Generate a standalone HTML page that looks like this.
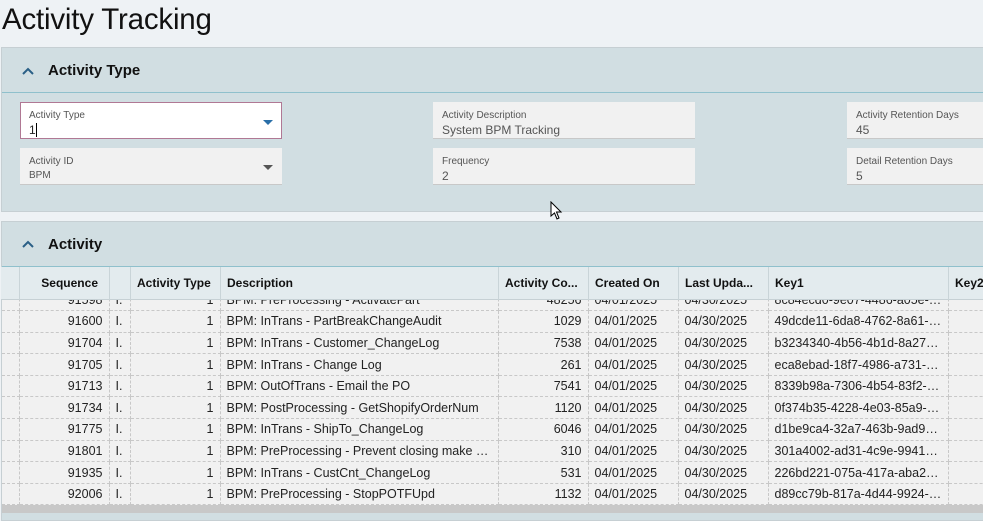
<!DOCTYPE html>
<html><head><style>
*{box-sizing:border-box;margin:0;padding:0}
body{width:983px;height:513px;overflow:hidden;background:#eef2f5;font-family:"Liberation Sans",sans-serif;position:relative;color:#222}
.abs{position:absolute}
h1{position:absolute;left:2px;top:3px;font-size:29.5px;font-weight:normal;color:#111;letter-spacing:-0.2px}
.panel{position:absolute;left:1px;width:990px;background:#d1dee2;border:1px solid #c6cfd3}
.ph{position:absolute;left:0;right:0;top:0;border-bottom:1px solid #8fc0cc}
.ph b{position:absolute;left:46px;font-size:15px;color:#111}
.chev{position:absolute;left:19px;width:14px;height:10px}
.f{position:absolute;width:262px;height:37px;background:#f1f1f1;border-bottom:1px solid #c8c8c8}
.f .l{position:absolute;left:9px;top:8px;font-size:10px;color:#555}
.f .v{position:absolute;left:9px;top:21px;font-size:12px;color:#555}
.f .dd{position:absolute;right:9px;top:17px;width:0;height:0;border-left:5px solid transparent;border-right:5px solid transparent;border-top:5px solid #555}
table{border-collapse:collapse;table-layout:fixed;font-size:12.5px}
td{height:21.6px;border-right:1px dashed #c8c8c8;border-bottom:1px dashed #c8c8c8;padding:0 6px;white-space:nowrap;overflow:hidden;text-overflow:ellipsis;color:#222}
.r{text-align:right}
.hd{position:absolute;left:1px;top:267px;width:990px;height:33px;background:#e3ebee;border-bottom:1px solid #c6d0d4}
.hd div{position:absolute;top:0;height:33px;line-height:33px;font-size:12px;font-weight:bold;color:#111;border-left:1px solid #c9d4d8;padding-left:6px}
</style></head><body>
<h1>Activity Tracking</h1>
<div class="panel" style="top:47px;height:165px">
 <div class="ph" style="height:45px">
  <svg class="chev" style="top:18px" viewBox="0 0 14 10"><path d="M2 8 L7 3 L12 8" stroke="#2a5f86" stroke-width="2" fill="none"/></svg>
  <b style="top:14px">Activity Type</b>
 </div>
</div>
<div class="f" style="left:20px;top:102px;background:#fff;border:1px solid #b07894;height:37px"><span class="l" style="left:8px;top:7px">Activity Type</span><span class="v" style="left:8px;top:20px;color:#222">1<span style="border-left:1px solid #000;margin-left:0"></span></span><span class="dd" style="border-top-color:#2a6fa8;right:8px"></span></div>
<div class="f" style="left:20px;top:148px"><span class="l">Activity ID</span><span class="v" style="font-size:10px;top:22px">BPM</span><span class="dd"></span></div>
<div class="f" style="left:433px;top:102px"><span class="l">Activity Description</span><span class="v">System BPM Tracking</span></div>
<div class="f" style="left:433px;top:148px"><span class="l">Frequency</span><span class="v">2</span></div>
<div class="f" style="left:847px;top:102px;width:140px"><span class="l">Activity Retention Days</span><span class="v">45</span></div>
<div class="f" style="left:847px;top:148px;width:140px"><span class="l">Detail Retention Days</span><span class="v">5</span></div>
<svg class="abs" style="left:550px;top:201px" width="14" height="20" viewBox="0 0 14 20"><path d="M1 1 L1 15 L4.5 12 L7 18 L9 17 L6.5 11 L11 11 Z" fill="#fff" stroke="#000" stroke-width="1"/></svg>
<div class="panel" style="top:221px;height:300px">
 <div class="ph" style="height:45px">
  <svg class="chev" style="top:17px" viewBox="0 0 14 10"><path d="M2 8 L7 3 L12 8" stroke="#2a5f86" stroke-width="2" fill="none"/></svg>
  <b style="top:14px">Activity</b>
 </div>
</div>
<div class="abs" style="left:2px;top:300px;width:990px;height:205px;overflow:hidden;background:#f1f1f1">
<table style="margin-top:-11px;width:1000px">
<colgroup><col style="width:17px"><col style="width:90px"><col style="width:21px"><col style="width:90px"><col style="width:278px"><col style="width:90px"><col style="width:90px"><col style="width:90px"><col style="width:180px"><col style="width:54px"></colgroup>
<tr><td></td><td class="r">91598</td><td>I.</td><td class="r">1</td><td>BPM: PreProcessing - ActivatePart</td><td class="r">48256</td><td>04/01/2025</td><td>04/30/2025</td><td>8c84ecd0-9e07-4486-a05e-4e...</td><td></td></tr>
<tr><td></td><td class="r">91600</td><td>I.</td><td class="r">1</td><td>BPM: InTrans - PartBreakChangeAudit</td><td class="r">1029</td><td>04/01/2025</td><td>04/30/2025</td><td>49dcde11-6da8-4762-8a61-b...</td><td></td></tr>
<tr><td></td><td class="r">91704</td><td>I.</td><td class="r">1</td><td>BPM: InTrans - Customer_ChangeLog</td><td class="r">7538</td><td>04/01/2025</td><td>04/30/2025</td><td>b3234340-4b56-4b1d-8a27-8f...</td><td></td></tr>
<tr><td></td><td class="r">91705</td><td>I.</td><td class="r">1</td><td>BPM: InTrans - Change Log</td><td class="r">261</td><td>04/01/2025</td><td>04/30/2025</td><td>eca8ebad-18f7-4986-a731-1e...</td><td></td></tr>
<tr><td></td><td class="r">91713</td><td>I.</td><td class="r">1</td><td>BPM: OutOfTrans - Email the PO</td><td class="r">7541</td><td>04/01/2025</td><td>04/30/2025</td><td>8339b98a-7306-4b54-83f2-b8...</td><td></td></tr>
<tr><td></td><td class="r">91734</td><td>I.</td><td class="r">1</td><td>BPM: PostProcessing - GetShopifyOrderNum</td><td class="r">1120</td><td>04/01/2025</td><td>04/30/2025</td><td>0f374b35-4228-4e03-85a9-c1...</td><td></td></tr>
<tr><td></td><td class="r">91775</td><td>I.</td><td class="r">1</td><td>BPM: InTrans - ShipTo_ChangeLog</td><td class="r">6046</td><td>04/01/2025</td><td>04/30/2025</td><td>d1be9ca4-32a7-463b-9ad9-fe...</td><td></td></tr>
<tr><td></td><td class="r">91801</td><td>I.</td><td class="r">1</td><td>BPM: PreProcessing - Prevent closing make dire...</td><td class="r">310</td><td>04/01/2025</td><td>04/30/2025</td><td>301a4002-ad31-4c9e-9941-4a...</td><td></td></tr>
<tr><td></td><td class="r">91935</td><td>I.</td><td class="r">1</td><td>BPM: InTrans - CustCnt_ChangeLog</td><td class="r">531</td><td>04/01/2025</td><td>04/30/2025</td><td>226bd221-075a-417a-aba2-3...</td><td></td></tr>
<tr><td></td><td class="r">92006</td><td>I.</td><td class="r">1</td><td>BPM: PreProcessing - StopPOTFUpd</td><td class="r">1132</td><td>04/01/2025</td><td>04/30/2025</td><td>d89cc79b-817a-4d44-9924-0f...</td><td></td></tr>
</table>
</div>
<div class="hd">
 <div style="left:0;width:18px;border-left:none"></div>
 <div style="left:18px;width:90px;text-align:right;padding-right:11px">Sequence</div>
 <div style="left:108px;width:21px"></div>
 <div style="left:129px;width:90px">Activity Type</div>
 <div style="left:219px;width:278px">Description</div>
 <div style="left:497px;width:90px">Activity Co...</div>
 <div style="left:587px;width:90px">Created On</div>
 <div style="left:677px;width:90px">Last Upda...</div>
 <div style="left:767px;width:180px">Key1</div>
 <div style="left:947px;width:50px">Key2</div>
</div>
<div class="abs" style="left:2px;top:505px;width:990px;height:8px;background:#c8c8c8"></div>
</body></html>
